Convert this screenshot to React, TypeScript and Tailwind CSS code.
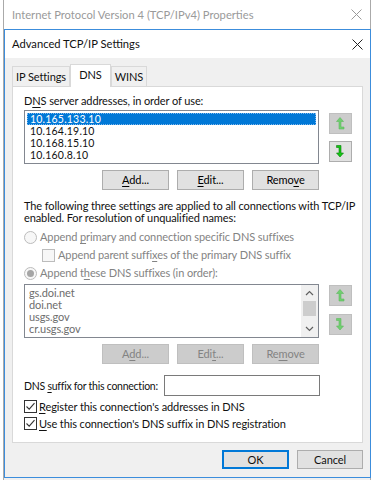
import React from 'react';

// Win10 "Advanced TCP/IP Settings" dialog, DNS tab

const font = "font-['Lato',sans-serif]";

function U({ children }: { children: React.ReactNode }) {
  return <span className="underline underline-offset-[2px] decoration-[1px]">{children}</span>;
}

function CloseX({ color }: { color: string }) {
  return (
    <svg width="11" height="11" viewBox="0 0 11 11">
      <path d="M0.5 0.5 L10.5 10.5 M10.5 0.5 L0.5 10.5" stroke={color} strokeWidth="1" />
    </svg>
  );
}

function MoveArrow({ dir, enabled }: { dir: 'up' | 'down'; enabled: boolean }) {
  const fill = enabled ? '#14c814' : '#6fcf6f';
  const stroke = enabled ? '#0a7a0a' : '#5fb85f';
  const d =
    dir === 'up'
      ? 'M4 0.5 L7.5 4.5 L5 4.5 L5 10 L8 10 L8 12 L3 12 L3 4.5 L0.5 4.5 Z'
      : 'M0.5 0.5 L5 0.5 L5 8 L7.5 8 L4 12 L0.5 8 L3 8 L3 2.5 L0.5 2.5 Z';
  return (
    <svg width="9" height="13" viewBox="0 0 9 13">
      <path d={d} fill={fill} stroke={stroke} strokeWidth="0.6" strokeLinejoin="round" />
    </svg>
  );
}

function SideButton({ dir, enabled }: { dir: 'up' | 'down'; enabled: boolean }) {
  return (
    <div
      className={`w-[23px] h-[21px] flex items-center justify-center border ${
        enabled ? 'bg-[#e1e1e1] border-[#adadad]' : 'bg-[#cccccc] border-[#bfbfbf]'
      }`}
    >
      <MoveArrow dir={dir} enabled={enabled} />
    </div>
  );
}

function Btn({ children, disabled = false }: { children: React.ReactNode; disabled?: boolean }) {
  return (
    <div
      className={`w-[67px] h-[20px] flex items-center justify-center border ${
        disabled ? 'bg-[#cccccc] border-[#bfbfbf] text-[#838383]' : 'bg-[#e1e1e1] border-[#adadad] text-black'
      }`}
    >
      {children}
    </div>
  );
}

function Radio({ checked }: { checked: boolean }) {
  return (
    <div className="w-[13px] h-[13px] shrink-0 rounded-full border border-[#bcbcbc] bg-[#f7f7f7] flex items-center justify-center">
      {checked && <div className="w-[7px] h-[7px] rounded-full bg-[#a5a5a5]" />}
    </div>
  );
}

function Check({ checked, disabled = false }: { checked: boolean; disabled?: boolean }) {
  return (
    <div
      className={`w-[13px] h-[13px] shrink-0 border flex items-center justify-center ${
        disabled ? 'border-[#bcbcbc] bg-[#f7f7f7]' : 'border-[#333333] bg-white'
      }`}
    >
      {checked && (
        <svg width="11" height="11" viewBox="0 0 11 11">
          <path d="M1.5 5.5 L4.2 8.2 L9.5 2.2" fill="none" stroke="#333333" strokeWidth="1.1" />
        </svg>
      )}
    </div>
  );
}

const dnsServers = ['10.165.133.10', '10.164.19.10', '10.168.15.10', '10.160.8.10'];
const suffixes = ['gs.doi.net', 'doi.net', 'usgs.gov', 'cr.usgs.gov'];

export default function App() {
  return (
    <div className={`relative w-[372px] h-[480px] overflow-hidden bg-white ${font} text-[11px] tracking-[-0.1px] leading-[16px] whitespace-nowrap text-[#111111]`}>
      {/* Window behind: IPv4 properties */}
      <div className="absolute left-[3px] top-0 w-[368px] h-[480px] border-x border-[#aaaaaa] bg-[#f0f0f0]">
        <div className="h-[29px] bg-white flex items-center justify-between pl-[8px] pr-[8px] text-[11.2px] tracking-normal text-[#9a9a9a]">
          <span>Internet Protocol Version 4 (TCP/IPv4) Properties</span>
          <CloseX color="#9a9a9a" />
        </div>
      </div>

      {/* Advanced TCP/IP Settings dialog */}
      <div className="absolute left-[4px] top-[29px] w-[367px] h-[449px] border border-[#3c8ddc] bg-[#f0f0f0] flex flex-col">
        <div className="h-[28px] bg-white flex items-center justify-between pl-[7px] pr-[7px] text-[11.2px] tracking-normal">
          <span>Advanced TCP/IP Settings</span>
          <CloseX color="#222222" />
        </div>

        <div className="flex flex-col pl-[7px] pt-[5px]">
          {/* Tabs */}
          <div className="flex items-end h-[23px]">
            <div className="w-[58px] h-[20px] border border-b-0 border-[#d9d9d9] bg-[#f0f0f0] flex items-center justify-center">
              IP Settings
            </div>
            <div className="relative z-10 w-[41px] h-[23px] -mb-px border border-b-0 border-[#d9d9d9] bg-white flex items-start justify-center pt-[2px]">
              DNS
            </div>
            <div className="w-[36px] h-[20px] border border-b-0 border-[#d9d9d9] bg-[#f0f0f0] flex items-center justify-center">
              WINS
            </div>
          </div>

          {/* Tab panel */}
          <div className="w-[351px] h-[357px] border border-[#d9d9d9] bg-white flex flex-col pl-[11px]">
            <div className="mt-[6px] h-[16px] flex items-center">
              <span>D<U>N</U>S server addresses, in order of use:</span>
            </div>

            <div className="mt-px flex gap-[10px]">
              <div className="w-[295px] h-[54px] border border-[#828790] bg-white p-[2px] flex flex-col">
                {dnsServers.map((ip, i) => (
                  <div
                    key={ip}
                    className={`h-[12px] leading-[12px] pl-[3px] tracking-[0.2px] text-[10.5px] ${
                      i === 0 ? 'bg-[#0078d7] text-white outline-1 outline-dotted outline-[#7fb8ec] -outline-offset-1' : ''
                    }`}
                  >
                    {ip}
                  </div>
                ))}
              </div>
              <div className="flex flex-col pt-[3px] gap-[7px]">
                <SideButton dir="up" enabled={false} />
                <SideButton dir="down" enabled={true} />
              </div>
            </div>

            <div className="mt-[6px] w-[295px] flex justify-end gap-[8px]">
              <Btn><span><U>A</U>dd...</span></Btn>
              <Btn><span><U>E</U>dit...</span></Btn>
              <Btn><span>Remo<U>v</U>e</span></Btn>
            </div>

            <div className="mt-[10px] leading-[12px]">
              The following three settings are applied to all connections with TCP/IP
              <br />
              enabled. For resolution of unqualified names:
            </div>

            <div className="mt-[4px] h-[18px] flex items-center gap-[3px] text-[#838383]">
              <Radio checked={false} />
              <span>Append <U>p</U>rimary and connection specific DNS suffixes</span>
            </div>
            <div className="h-[18px] flex items-center gap-[3px] pl-[18px] text-[#838383]">
              <Check checked={false} disabled />
              <span>Append parent suffi<U>x</U>es of the primary DNS suffix</span>
            </div>
            <div className="h-[18px] flex items-center gap-[3px] text-[#838383]">
              <Radio checked={true} />
              <span>Append t<U>h</U>ese DNS suffixes (in order):</span>
            </div>

            <div className="mt-[2px] flex gap-[10px]">
              <div className="w-[295px] h-[54px] border border-[#828790] bg-white flex">
                <div className="flex-1 p-[2px] pl-[4px] flex flex-col text-[#6d6d6d]">
                  {suffixes.map((s) => (
                    <div key={s} className="h-[12px] leading-[12px]">
                      {s}
                    </div>
                  ))}
                </div>
                <div className="w-[17px] bg-[#f0f0f0] flex flex-col items-center">
                  <div className="h-[16px] flex items-center justify-center">
                    <svg width="9" height="6" viewBox="0 0 9 6">
                      <path d="M1 5 L4.5 1.5 L8 5" fill="none" stroke="#606060" strokeWidth="1.2" />
                    </svg>
                  </div>
                  <div className="w-[13px] h-[15px] bg-[#cdcdcd]" />
                  <div className="flex-1" />
                  <div className="h-[16px] flex items-center justify-center">
                    <svg width="9" height="6" viewBox="0 0 9 6">
                      <path d="M1 1 L4.5 4.5 L8 1" fill="none" stroke="#606060" strokeWidth="1.2" />
                    </svg>
                  </div>
                </div>
              </div>
              <div className="flex flex-col pt-[1px] gap-[8px]">
                <SideButton dir="up" enabled={false} />
                <SideButton dir="down" enabled={false} />
              </div>
            </div>

            <div className="mt-[6px] w-[295px] flex justify-end gap-[8px]">
              <Btn disabled><span>A<U>d</U>d...</span></Btn>
              <Btn disabled><span>Edi<U>t</U>...</span></Btn>
              <Btn disabled><span>Re<U>m</U>ove</span></Btn>
            </div>

            <div className="mt-[11px] flex items-center">
              <span className="w-[140px] text-[10.5px] tracking-[-0.25px]">DNS <U>s</U>uffix for this connection:</span>
              <div className="w-[156px] h-[21px] border border-[#7a7a7a] bg-white" />
            </div>

            <div className="mt-[2px] h-[17px] flex items-center gap-[2px]">
              <Check checked />
              <span><U>R</U>egister this connection's addresses in DNS</span>
            </div>
            <div className="h-[17px] flex items-center gap-[2px]">
              <Check checked />
              <span><U>U</U>se this connection's DNS suffix in DNS registration</span>
            </div>
          </div>

          {/* Dialog buttons */}
          <div className="mt-[7px] w-[351px] flex justify-end gap-[8px]">
            <div className="w-[67px] h-[19px] border-2 border-[#0078d7] bg-[#e1e1e1] flex items-center justify-center">
              OK
            </div>
            <div className="w-[66px] h-[19px] border border-[#adadad] bg-[#e1e1e1] flex items-center justify-center">
              Cancel
            </div>
          </div>
        </div>
      </div>
    </div>
  );
}
